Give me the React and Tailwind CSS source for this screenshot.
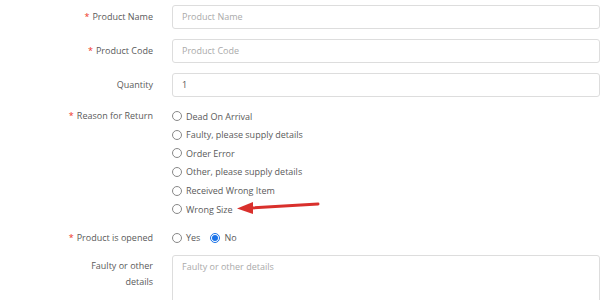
const font = { fontFamily: '"Open Sans", "Noto Sans", sans-serif' };

function Label({ required, children, className = "" }) {
  return (
    <div className={`w-[153px] shrink-0 text-right text-[9px] text-[#5a5a5a] ${className}`}>
      {required && <span className="text-[#e32] mr-[3px]">*</span>}
      {children}
    </div>
  );
}

function Radio({ checked, label }) {
  return (
    <div className="flex items-center h-[18.6px]">
      {checked ? (
        <span className="w-[10px] h-[10px] rounded-full border border-[#1a73e8] flex items-center justify-center">
          <span className="w-[6px] h-[6px] rounded-full bg-[#1a73e8]" />
        </span>
      ) : (
        <span className="w-[10px] h-[10px] rounded-full border border-[#888] bg-white" />
      )}
      <span className="ml-[4px] text-[9px] text-[#5a5a5a]">{label}</span>
    </div>
  );
}

function InputRow({ label, required, placeholder, value }) {
  return (
    <div className="flex items-center gap-[19px] mb-[10px]">
      <Label required={required}>{label}</Label>
      <div className="w-[460px] h-[24px] border border-[#ddd] rounded-[3px] px-[9px] flex items-center text-[9px]">
        {value ? (
          <span className="text-[#555]">{value}</span>
        ) : (
          <span className="text-[#aaa]">{placeholder}</span>
        )}
      </div>
    </div>
  );
}

export default function App() {
  const reasons = [
    "Dead On Arrival",
    "Faulty, please supply details",
    "Order Error",
    "Other, please supply details",
    "Received Wrong Item",
    "Wrong Size",
  ];

  return (
    <div className="relative w-[600px] h-[300px] overflow-hidden bg-white pt-[5px]" style={font}>
      <InputRow label="Product Name" required placeholder="Product Name" />
      <InputRow label="Product Code" required placeholder="Product Code" />
      <InputRow label="Quantity" value="1" />

      <div className="flex gap-[19px] mt-[3px]">
        <Label required className="leading-[18.6px]">Reason for Return</Label>
        <div>
          {reasons.map((r) => (
            <Radio key={r} label={r} />
          ))}
        </div>
      </div>

      <div className="flex gap-[19px] mt-[10px]">
        <Label required className="leading-[18.6px]">Product is opened</Label>
        <div className="flex gap-[10px]">
          <Radio label="Yes" />
          <Radio checked label="No" />
        </div>
      </div>

      <div className="flex gap-[19px] mt-[8px]">
        <Label className="pt-[3px] leading-[16px]">
          Faulty or other
          <br />
          details
        </Label>
        <div className="w-[460px] h-[80px] border border-[#ddd] rounded-[3px] px-[9px] pt-[3px] text-[9px] leading-[16px] text-[#aaa]">
          Faulty or other details
        </div>
      </div>

      {/* arrow */}
      <svg className="absolute left-[230px] top-[196px]" width="95" height="22" viewBox="0 0 95 22">
        <line x1="88" y1="8" x2="20" y2="12" stroke="#d9302c" strokeWidth="3" strokeLinecap="round" />
        <polygon points="7,12.5 23,6 23,18" fill="#d9302c" />
      </svg>
    </div>
  );
}
